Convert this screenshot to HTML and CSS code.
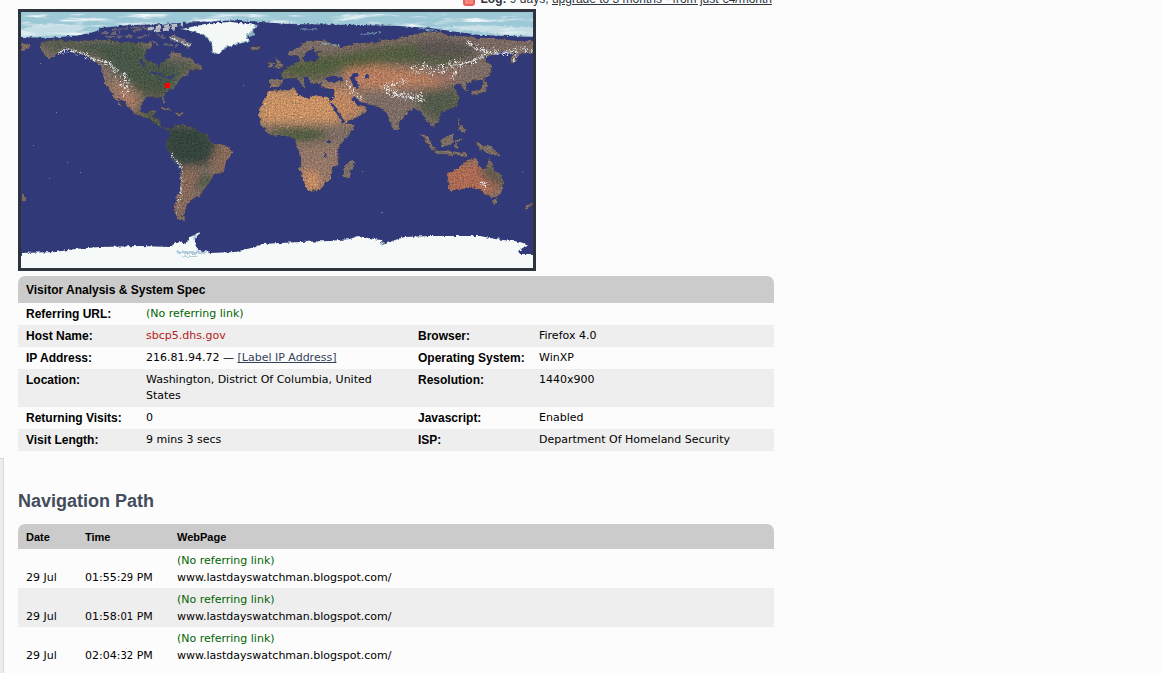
FILE: index.html
```html
<!DOCTYPE html>
<html lang="en">
<head>
<meta charset="utf-8">
<title>Visitor Analysis</title>
<link rel="stylesheet" href="styles.css">
</head>
<body>
<div class="page">
<aside class="rail"></aside>
<main class="content">
  <div class="log-strip">
    <svg class="log-icon" viewBox="0 0 12 12" aria-hidden="true"><rect width="12" height="12" rx="3" fill="#e9605b"/><rect x="2" y="1" width="8" height="9" rx="1" fill="#f58a80"/><path d="M6 1v9" stroke="#ee746d"/></svg>
    <p class="log-text"><b>Log:</b> 9 days, <a href="#upgrade">upgrade to 3 months - from just €4/month</a></p>
  </div>
  <div class="map">
  <svg viewBox="21 12 512 256" role="img" aria-label="World map with visitor location">
    <defs>
      <filter id="rough" x="21" y="12" width="512" height="256" filterUnits="userSpaceOnUse" color-interpolation-filters="sRGB">
        <feTurbulence type="fractalNoise" baseFrequency=".22" numOctaves="3" seed="8" result="edge"/>
        <feDisplacementMap in="SourceGraphic" in2="edge" scale="5" xChannelSelector="R" yChannelSelector="G" result="shape"/>
        <feTurbulence type="fractalNoise" baseFrequency=".65" numOctaves="3" seed="3"/>
        <feColorMatrix values=".6 .4 .4 0 -.2  .4 .6 .4 0 -.2  .4 .4 .6 0 -.2  0 0 0 0 1" result="grain"/>
        <feComposite in="shape" in2="grain" operator="arithmetic" k1=".8" k2=".54" result="mix"/>
        <feComposite in="mix" in2="shape" operator="in"/>
      </filter>
      <filter id="coast" x="21" y="12" width="512" height="256" filterUnits="userSpaceOnUse">
        <feTurbulence type="fractalNoise" baseFrequency=".3" numOctaves="2" seed="5"/>
        <feDisplacementMap in="SourceGraphic" scale="4" xChannelSelector="R" yChannelSelector="G"/>
      </filter>
      <filter id="snow" x="21" y="12" width="512" height="256" filterUnits="userSpaceOnUse">
        <feTurbulence type="fractalNoise" baseFrequency=".45" numOctaves="2" seed="12" result="n"/>
        <feColorMatrix in="n" values="0 0 0 0 1  0 0 0 0 1  0 0 0 0 1  8 0 0 0 -4.1" result="holes"/>
        <feComposite in="SourceGraphic" in2="holes" operator="in" result="flakes"/>
        <feDisplacementMap in="flakes" in2="n" scale="5" xChannelSelector="R" yChannelSelector="G"/>
      </filter>
      <filter id="streaks" x="21" y="12" width="512" height="30" filterUnits="userSpaceOnUse">
        <feTurbulence type="fractalNoise" baseFrequency=".03 .22" numOctaves="4" seed="4"/>
        <feColorMatrix values="0 0 0 0 .9  0 0 0 0 .95  0 0 0 0 .96  3 0 0 0 -1.5"/>
        <feComposite in2="SourceGraphic" operator="in"/>
      </filter>
      <filter id="soft"><feGaussianBlur stdDeviation="4"/></filter>
      <path id="ice" d="M15 4H539V37L510 36 480 35 450 31 430 28 400 26 360 25 290 24 260 22 240 20 200 22 160 24 130 25 100 28 98 31 80 35 50 38 15 37Z"/>
      <clipPath id="land">
        <path d="M40 42 52 40 75 41 95 40 110 40 125 42 140 43 151 42 153 46 146 51 145 57 151 62 157 64 159 69 163 61 169 58 171 52 180 53 185 57 192 58 195 63 202 66 203 70 190 71 186 76 180 80 173 88 165 93 164 97 166 104 162 102 160 97 148 98 142 101 141 110 147 114 152 110 156 111 153 117 160 119 161 127 171 128 176 125 190 126 198 131 208 135 211 142 224 145 232 151 230 156 226 162 224 172 213 175 209 184 203 191 199 197 193 199 187 205 185 212 182 216 186 219 182 221 176 217 174 210 177 198 181 185 181 167 174 161 170 154 166 149 166 142 170 137 169 130 161 128 150 119 138 116 131 110 124 102 118 97 122 107 119 105 112 94 105 83 102 75 101 66 95 62 85 56 75 53 65 49 58 54 49 60 46 56 41 51Z"/>
        <path d="M268 91 283 90 296 88 297 94 308 99 314 95 328 97 331 101 336 110 343 119 345 124 355 124 353 130 348 137 340 145 338 150 339 162 333 168 331 177 326 183 320 190 308 191 303 180 299 168 301 158 296 147 295 140 290 136 276 136 268 134 262 126 259 118 259 109 264 99ZM352 158 355 163 350 177 344 177 344 168Z"/>
        <path d="M270 79 282 79 281 73 286 68 295 63 299 62 299 56 302 57 304 62 314 61 319 58 315 54 322 53 315 52 313 47 306 54 301 60 297 55 289 56 289 52 299 46 308 41 320 40 336 44 340 47 355 44 370 42 380 43 379 38 390 40 405 36 420 33 440 31 450 36 465 36 480 39 500 39 520 41 540 41 540 52 520 54 515 61 510 65 511 57 515 53 505 52 493 55 485 58 492 67 489 76 482 80 474 81 465 84 469 92 466 92 461 84 454 86 458 92 459 100 456 107 447 110 440 113 440 121 433 128 428 122 424 116 420 112 414 108 406 114 399 123 399 130 394 130 389 120 386 112 380 108 372 105 360 104 352 98 355 104 367 108 362 115 350 121 344 124 338 112 331 101 334 97 333 89 320 88 322 83 315 85 311 83 308 78 302 77 306 85 304 88 299 81 294 77 284 80 279 88 270 87Z"/>
        <path d="M446 174 460 167 463 163 471 158 479 160 478 166 486 170 489 157 493 167 499 173 504 181 503 190 498 197 488 197 482 191 473 187 463 188 450 191 448 185ZM420 133 427 136 436 149 432 151ZM435 150 450 151 466 153 466 156 437 154ZM440 140 447 136 453 133 453 143 447 147 441 146ZM455 140 464 138 457 143 460 150 455 148ZM475 142 482 145 491 146 501 157 489 154 485 151 479 149ZM457 117 460 119 459 123 465 128 465 134 459 130ZM484 78 488 86 486 92 475 95 471 97 472 91 481 89ZM487 61 490 64 491 76 488 76ZM274 57 279 60 284 67 273 69 277 63ZM269 62 275 63 269 68ZM251 47 262 46 258 50 253 51ZM491 199 499 199 494 206ZM534 201 527 205 524 210 531 208ZM159 107 168 108 173 112 164 110ZM174 112 184 113 179 117ZM19 42 32 45 27 49 19 52Z"/>
      </clipPath>
    </defs>
    <rect x="21" y="12" width="512" height="256" fill="#313979"/>
    <g filter="url(#rough)">
      <g clip-path="url(#land)">
        <rect x="21" y="12" width="520" height="256" fill="#84736b"/>
        <g filter="url(#soft)">
          <path fill="#4b5b4b" d="M65 41 140 41 155 60 190 60 180 80 162 100 145 97 125 80 100 57 65 51Z"/>
          <path fill="#5a6053" d="M30 35 75 37 90 48 55 55ZM170 60 205 66 198 72 180 75Z"/>
          <path fill="#b38167" d="M106 82 122 84 140 98 138 110 126 107Z"/>
          <path fill="#505a46" d="M134 105 163 115 165 130 145 122ZM130 82 165 80 162 97 144 97Z"/>
          <path fill="#384a40" d="M163 124 202 126 218 145 208 165 180 167 162 150Z"/>
          <path fill="#91705e" d="M220 143 235 146 222 178 208 170ZM181 168 202 168 193 195 182 216 173 215Z"/>
          <path fill="#53604b" d="M198 174 214 174 208 190 196 189Z"/>
          <path fill="#d49a6b" d="M260 88 332 93 342 124 258 124Z"/>
          <path fill="#c78d66" d="M326 82 350 90 368 108 346 124 330 100Z"/>
          <path fill="#c28565" d="M342 70 370 63 390 67 410 69 452 78 440 86 375 90 348 88Z"/>
          <path fill="#536042" d="M264 129 315 127 332 136 310 142 287 140Z"/>
          <path fill="#9c7e6d" d="M298 145 340 143 340 190 300 190Z"/>
          <path fill="#d8976b" d="M302 171 318 173 320 190 306 194Z"/>
          <path fill="#576343" d="M281 65 306 60 318 56 344 53 370 48 420 41 455 41 472 58 450 66 395 63 350 68 320 78 284 78Z"/>
          <path fill="#615a54" d="M415 38 480 38 474 58 420 58Z"/>
          <path fill="#826d68" d="M310 39 530 38 530 48 490 46 440 39 340 51Z"/>
          <path fill="#59604f" d="M418 92 456 86 462 108 435 122 418 108Z"/>
          <path fill="#a37768" d="M432 76 463 65 450 86Z"/>
          <path fill="#b77158" d="M445 166 475 160 500 192 480 196 445 192Z"/>
          <path fill="#605b50" d="M482 162 507 178 502 186 482 178Z"/>
        </g>
      </g>
    </g>
    <g filter="url(#coast)" fill="none">
      <path stroke="#696372" stroke-width="2" stroke-dasharray="9 2 5 3" d="M100 33H120M106 37 132 36M133 31 148 28M138 38 150 35M112 30 145 27M157 34 166 39M164 44 178 46M153 41 158 45"/>
      <path stroke="#7b7077" stroke-width="5" d="M171 37 182 41 190 46"/>
      <path stroke="#b9bfc3" stroke-width="3" stroke-dasharray="6 2" d="M148 29 165 26 183 25M155 31 174 28"/>
      <path stroke="#d5edf0" stroke-width="1" d="M169 37 190 46"/>
      <path stroke="#7ba7b9" stroke-width="1" d="M300 29H317M361 35 380 32M418 28 437 31M322 43 340 46"/>
      <g fill="#313979"><ellipse cx="334" cy="79" rx="9" ry="3"/><path d="M350 77 355 73 358 75 355 79 360 85 357 89 353 86Z"/><circle cx="367" cy="76" r="2"/><circle cx="329" cy="142" r="2"/></g>
      <path stroke="#313979" stroke-width="3" d="M331 103 337 112 344 123M353 98 359 103 367 105"/>
      <path stroke="#313979" stroke-width="2" d="M150 72 160 74 167 78 175 76M159 79 161 82M141 60 144 66M325 153 326 157"/>
    </g>
    <use href="#ice" fill="#9dc8d6" filter="url(#coast)"/>
    <use href="#ice" filter="url(#streaks)"/>
    <path d="M15 30 50 23 88 27 70 35 15 37ZM442 27 480 25 539 28V36L490 33 465 30Z" fill="#e0edef" opacity=".6" filter="url(#coast)"/>
    <rect x="21" y="12" width="512" height="2" fill="#9dc8d6"/>
    <path d="M181 29 205 24 230 22 259 25 253 30 254 35 247 38 250 41 235 45 226 48 219 54 213 53 211 42 201 34 190 31Z" fill="#8eb3bf" filter="url(#coast)"/>
    <path d="M184 29 207 24 230 22 255 25 250 32 246 37 248 40 234 44 225 47 219 54 213 52 212 42 203 34Z" fill="#f3f8f6" filter="url(#coast)"/>
    <g fill="none" stroke="#e4e6e6" stroke-linejoin="round" filter="url(#snow)">
      <path stroke-width="5" d="M59 52 67 50 84 55 94 60 108 63 118 72"/>
      <path stroke-width="12" d="M120 74 128 93"/>
      <path stroke-width="5" d="M348 80 350 90 363 99"/>
      <path stroke-width="9" d="M383 84 393 93 409 97 426 98"/>
      <path stroke-width="5" d="M390 84 408 80"/>
      <path stroke-width="9" d="M412 70 425 67 435 73M438 71 451 65 461 61"/>
      <path stroke-width="5" d="M459 65 475 61 488 53 467 42M485 51 505 53 520 49 533 51M520 50 512 61M459 68 452 80"/>
      <path stroke-width="3" d="M170 154 181 167 182 185 177 213"/>
      <path stroke-width="6" d="M480 182 487 187"/>
    </g>
    <path fill="none" stroke="#e6e8e8" stroke-width="1" stroke-dasharray="5 2" d="M58 53 67 49 84 54 94 59 108 63 116 70M468 43 476 49 492 53 506 53 520 49M459 65 475 60 488 53M386 85 397 96 424 99" filter="url(#coast)"/>
    <path d="M21 253 55 252 75 249 100 247 140 246 170 247 178 241 185 244 190 237 201 232 195 238 196 249 210 253 235 252 255 247 262 244 300 242 330 241 350 239 358 236 368 238 381 240 382 245 395 240 405 237 430 236 450 236 480 236 495 239 520 242 529 245 518 251 520 254 539 254V274H21Z" fill="#f5f9f7" filter="url(#coast)"/>
    <path d="M21 256H533V268H21Z" fill="#f5f9f7"/>
    <path d="M177 251H207L205 254H179ZM180 256H197V257H186ZM379 243 385 242 381 246ZM192 237 197 235 194 241Z" fill="#b2cedc" filter="url(#coast)"/>
    <path d="M67 162h1v1h-1zM80 172h1v1h-1zM49 178h1v1h-1zM33 145h1v1h-1zM381 212h2v1h-2zM362 171h1v1h-1zM40 63h1v1h-1zM56 112h1v1h-1zM243 85h1v1h-1z" fill="#817f91"/>
    <path d="M22 194h2v3h2v4h-4zM521 171h2l1 2z" fill="#806758"/>
    <rect x="165" y="83" width="5" height="5" fill="red"/>
  </svg>
  </div>

  <table class="grid spec">
    <colgroup><col class="c-label"><col class="c-value"><col class="c-label2"><col></colgroup>
    <thead><tr><th colspan="4">Visitor Analysis &amp; System Spec</th></tr></thead>
    <tbody>
      <tr><th scope="row">Referring URL:</th><td colspan="3" class="none">(No referring link)</td></tr>
      <tr><th scope="row">Host Name:</th><td class="host">sbcp5.dhs.gov</td><th scope="row">Browser:</th><td>Firefox 4.0</td></tr>
      <tr><th scope="row">IP Address:</th><td>216.81.94.72 — <a href="#label">[Label IP Address]</a></td><th scope="row">Operating System:</th><td>WinXP</td></tr>
      <tr><th scope="row">Location:</th><td>Washington, District Of Columbia, United States</td><th scope="row">Resolution:</th><td>1440x900</td></tr>
      <tr><th scope="row">Returning Visits:</th><td>0</td><th scope="row">Javascript:</th><td>Enabled</td></tr>
      <tr><th scope="row">Visit Length:</th><td>9 mins 3 secs</td><th scope="row">ISP:</th><td>Department Of Homeland Security</td></tr>
    </tbody>
  </table>

  <h2 class="title">Navigation Path</h2>

  <table class="grid visits">
    <colgroup><col class="c-date"><col class="c-time"><col></colgroup>
    <thead><tr><th>Date</th><th>Time</th><th>WebPage</th></tr></thead>
    <tbody>
      <tr><td>29 Jul</td><td>01:55:<span class="sec">29</span> PM</td><td><span class="none">(No referring link)</span><br>www.lastdayswatchman.blogspot.com/</td></tr>
      <tr><td>29 Jul</td><td>01:58:<span class="sec">01</span> PM</td><td><span class="none">(No referring link)</span><br>www.lastdayswatchman.blogspot.com/</td></tr>
      <tr><td>29 Jul</td><td>02:04:<span class="sec">32</span> PM</td><td><span class="none">(No referring link)</span><br>www.lastdayswatchman.blogspot.com/</td></tr>
    </tbody>
  </table>
</main>
</div>
</body>
</html>
```
FILE: styles.css
```css
* { box-sizing: border-box; }
body {
  margin: 0;
  background: #fcfcfc;
  color: #000;
  font: 11px/16px Verdana, "DejaVu Sans", sans-serif;
}
.page {
  display: flex;
  gap: 14px;
  min-height: 100vh;
}
.rail {
  flex: 0 0 4px;
  margin-top: 458px;
  background: #ededf0;
  border-top: 1px solid #d8d8d8;
  border-right: 1px solid #d8d8d8;
}
.content {
  flex: 0 1 756px;
  min-width: 0;
}
.log-strip {
  display: flex;
  justify-content: flex-end;
  align-items: flex-end;
  gap: 6px;
  height: 9px;
  padding: 0 2px 3px 0;
  overflow: hidden;
  color: #2f3640;
}
.log-icon { flex: none; width: 12px; height: 12px; }
.log-text {
  margin: 0;
  font: 12px/14px "Liberation Sans", Arial, sans-serif;
  white-space: nowrap;
}
a { color: #34435a; }
.log-text a { color: inherit; }
.map {
  max-width: 518px;
  margin-bottom: 5px;
  border: 3px solid #2d343e;
}
.map svg { display: block; width: 100%; }
.grid {
  width: 100%;
  table-layout: fixed;
  border-collapse: separate;
  border-spacing: 0;
}
.grid th, .grid td {
  padding: 3px 8px;
  text-align: left;
  vertical-align: top;
}
.grid th {
  padding-right: 0;
  font: bold 12px/16px "Liberation Sans", Arial, sans-serif;
}
.grid thead th { background: #cbcbcb; }
.grid thead th:first-child { border-top-left-radius: 7px; }
.grid thead th:last-child { border-top-right-radius: 7px; }
.grid tbody tr:nth-child(even) { background: #eee; }
.spec thead th { padding-top: 6px; padding-bottom: 5px; }
.c-label { width: 120px; }
.c-value { width: 272px; }
.c-label2 { width: 121px; }
.none { color: #006400; }
.host { color: #b22222; }
.title {
  margin: 39px 0 11px;
  color: #434c5a;
  font: bold 18px/23px "Liberation Sans", Arial, sans-serif;
}
.visits thead th {
  padding-top: 5px;
  padding-bottom: 4px;
  font-size: 11px;
}
.visits td {
  padding: 3px 0 2px 8px;
  line-height: 17px;
  vertical-align: bottom;
}
.c-date { width: 59px; }
.c-time { width: 92px; }
.sec { font-size: 10px; }
```
